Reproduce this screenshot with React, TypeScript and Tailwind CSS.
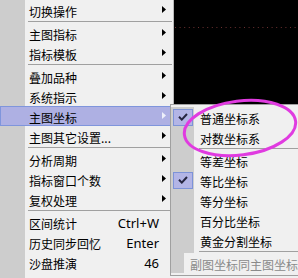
type Row = { label: string; arrow?: boolean; hint?: string; active?: boolean; checked?: boolean; dim?: boolean } | "sep";

const mainMenu: Row[] = [
  { label: "切换操作", arrow: true },
  "sep",
  { label: "主图指标", arrow: true },
  { label: "指标模板", arrow: true },
  "sep",
  { label: "叠加品种", arrow: true },
  { label: "系统指示", arrow: true },
  { label: "主图坐标", arrow: true, active: true },
  { label: "主图其它设置...", arrow: true },
  "sep",
  { label: "分析周期", arrow: true },
  { label: "指标窗口个数", arrow: true },
  { label: "复权处理", arrow: true },
  "sep",
  { label: "区间统计", hint: "Ctrl+W" },
  { label: "历史同步回忆", hint: "Enter" },
  { label: "沙盘推演", hint: "46" },
];

const subMenu: Row[] = [
  { label: "普通坐标系", checked: true },
  { label: "对数坐标系" },
  "sep",
  { label: "等差坐标" },
  { label: "等比坐标", checked: true },
  { label: "等分坐标" },
  { label: "百分比坐标" },
  { label: "黄金分割坐标" },
  "sep",
  { label: "副图坐标同主图坐标", dim: true },
];

function Arrow({ light }: { light?: boolean }) {
  return (
    <svg width="4" height="7" viewBox="0 0 4 7" className="shrink-0">
      <path d="M0 0L4 3.5L0 7Z" fill={light ? "#eef0fa" : "#000"} />
    </svg>
  );
}

function Check() {
  return (
    <div className="flex h-[17px] w-[20px] items-center justify-center border border-[#7d93d8] bg-[#b3b5e6]">
      <svg width="10" height="8" viewBox="0 0 10 8">
        <path d="M1 3.8L3.8 6.6L9 1" fill="none" stroke="#262640" strokeWidth="2" />
      </svg>
    </div>
  );
}

function MainMenu() {
  return (
    <div className="flex w-[174px] shrink-0 flex-col border-r border-[#b9b9b9] bg-[#f0f0f0]">
      {mainMenu.map((row, i) =>
        row === "sep" ? (
          <div className="flex h-[3px]" key={i}>
            <div className="w-[25px] bg-[#cdcdcd]" />
            <div className="ml-[3px] mr-[1px] mt-[1px] h-px flex-1 bg-[#a0a0a0]" />
          </div>
        ) : (
          <div
            className={`flex h-5 items-center ${row.active ? "border border-[#7f95dc] bg-[#aeb0e3]" : ""}`}
            key={i}
          >
            <div className={`self-stretch ${row.active ? "w-[24px]" : "w-[25px] bg-[#cdcdcd]"}`} />
            <span className="ml-1 flex-1 pt-[3px] text-[12px] leading-none text-black">{row.label}</span>
            {row.hint && (
              <span className="mr-[14px] pt-[2px] font-['Noto_Sans',sans-serif] text-[13px] leading-none text-black">
                {row.hint}
              </span>
            )}
            {row.arrow && (
              <div className={`mb-[1px] ${row.active ? "mr-[6px]" : "mr-[7px]"}`}>
                <Arrow light={row.active} />
              </div>
            )}
          </div>
        ),
      )}
      <div className="flex flex-1">
        <div className="w-[25px] bg-[#cdcdcd]" />
      </div>
    </div>
  );
}

function SubMenu() {
  return (
    <div className="absolute left-[170px] top-[104px] h-[174px] w-[128px] bg-[#f0f0f0]">
      <div className="flex flex-col border-b border-l border-t border-[#a0a0a0] py-[2px]">
        {subMenu.map((row, i) =>
          row === "sep" ? (
            <div className="flex h-[3px]" key={i}>
              <div className="w-[23px] bg-[#cdcdcd]" />
              <div className="ml-[5px] mt-[1px] h-px flex-1 bg-[#a0a0a0]" />
            </div>
          ) : (
            <div className="flex h-5 items-center" key={i}>
              <div className="flex w-[23px] items-center self-stretch bg-[#cdcdcd] pl-[2px]">
                {row.checked && <Check />}
              </div>
              <span
                className={`ml-[6px] whitespace-nowrap pt-[3px] text-[12px] leading-none ${
                  row.dim ? "text-[#8a8a8a]" : "text-black"
                }`}
              >
                {row.label}
              </span>
            </div>
          ),
        )}
      </div>
    </div>
  );
}

export default function App() {
  return (
    <div className="relative flex h-[278px] w-[298px] overflow-hidden bg-black font-['Noto_Sans_CJK_SC',sans-serif]">
      <MainMenu />
      <div className="flex-1 pt-[27px]">
        <svg width="124" height="1" className="block">
          <line x1="1" y1="0.5" x2="124" y2="0.5" stroke="#6b3030" strokeDasharray="1 3.6" />
        </svg>
      </div>
      <SubMenu />
      <svg className="pointer-events-none absolute inset-0" width="298" height="278">
        <ellipse cx="240" cy="128" rx="56" ry="27" fill="none" stroke="#e03be0" strokeWidth="3" transform="rotate(-7 240 128)" />
      </svg>
    </div>
  );
}
